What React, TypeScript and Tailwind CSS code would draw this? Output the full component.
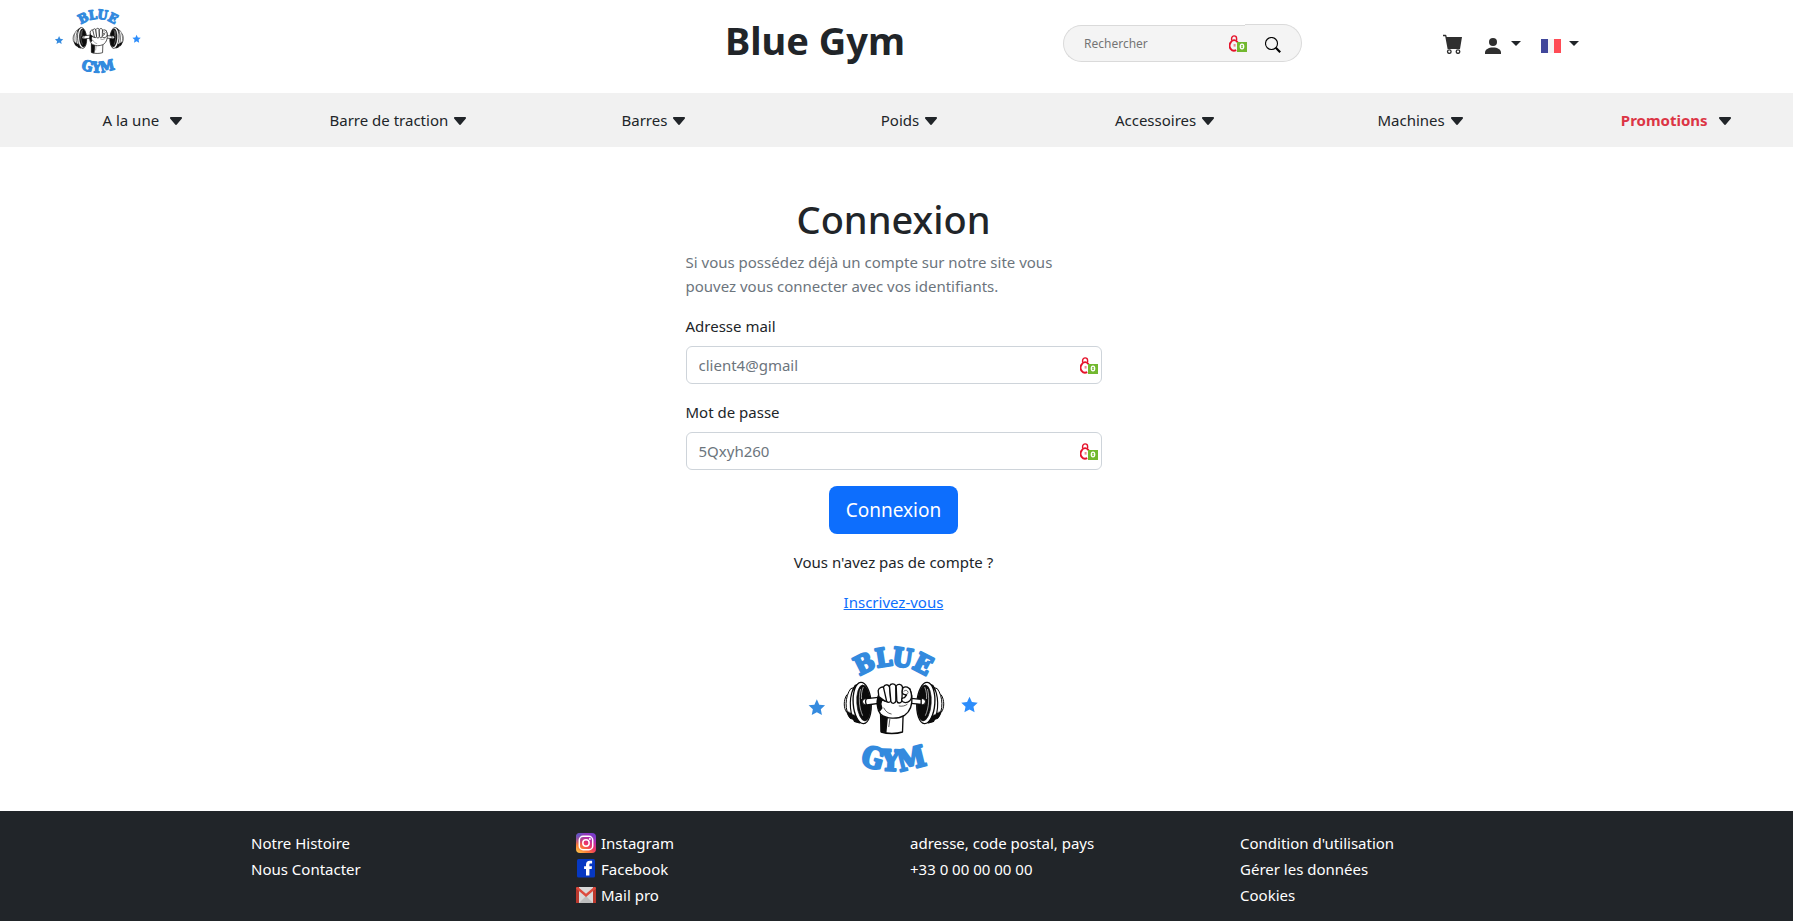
import type { ReactNode } from 'react';

const star = (cx: number, cy: number, r: number) =>
  Array.from({ length: 10 }, (_, i) => {
    const radius = i % 2 === 0 ? r : r * 0.48;
    const a = (Math.PI / 5) * i - Math.PI / 2;
    return `${(cx + radius * Math.cos(a)).toFixed(1)},${(cy + radius * Math.sin(a)).toFixed(1)}`;
  }).join(' ');

function Weight() {
  return (
    <g stroke="#0b0b0b" strokeLinejoin="round" strokeLinecap="round">
      <path d="M172 200c-9 14-9 38 0 50l8-2v-46z" fill="#fff" strokeWidth="3" />
      <path d="M184 181c-17 22-18 64-1 88l14 4v-96z" fill="#fff" strokeWidth="3" />
      <path d="M172 247c2 10 6 17 11 22l14 4v-14z" fill="#0b0b0b" strokeWidth="1" />
      <path d="M198 170c-18 26-20 78-2 108l16 5V166z" fill="#fff" strokeWidth="3.500" />
      <path d="M186 256c3 10 6 17 11 23l14 4v-18z" fill="#0b0b0b" strokeWidth="1" />
      <path d="M191 185l7-14 14-6v12z" fill="#0b0b0b" strokeWidth="1" />
      <ellipse cx="219" cy="223" rx="27" ry="62" fill="#fff" strokeWidth="4" transform="rotate(-4 219 223)" />
      <ellipse cx="224" cy="223" rx="21" ry="54" fill="#0b0b0b" strokeWidth="2" transform="rotate(-4 224 223)" />
      <path d="M214 182c-6 22-5 54 6 78M222 176c-5 12-6 24-5 34" fill="none" stroke="#fff" strokeWidth="1.800" />
      <circle cx="229" cy="219" r="9" fill="#fff" strokeWidth="3" />
    </g>
  );
}

function Logo({ className, id }: { className: string; id: string }) {
  return (
    <svg viewBox="48 40 530 396" className={className} role="img" aria-label="Blue Gym">
      <defs>
        <path id={`${id}-top`} d="M174 182A170 170 0 0 1 450 182" />
        <path id={`${id}-bottom`} d="M190 394A250 250 0 0 0 436 394" />
      </defs>
      <g
        fill="#338ade"
        stroke="#338ade"
        strokeWidth="7"
        strokeLinejoin="round"
        fontFamily="'DejaVu Serif Condensed', 'DejaVu Serif', serif"
        fontWeight="700"
        textAnchor="middle"
      >
        <text fontSize="76">
          <textPath href={`#${id}-top`} startOffset="50%">BLUE</textPath>
        </text>
        <text fontSize="86">
          <textPath href={`#${id}-bottom`} startOffset="50%">GYM</textPath>
        </text>
      </g>
      <polygon points={star(83, 238, 26)} fill="#358bdf" />
      <polygon points={star(541, 230, 26)} fill="#2d8dfb" />
      <Weight />
      <g transform="translate(629 0) scale(-1 1)">
        <Weight />
      </g>
      <g stroke="#0b0b0b" strokeWidth="4" strokeLinejoin="round" strokeLinecap="round" fill="#fff">
        <path d="M232 210l58-6v17l-57 8c-5-5-5-14-1-19z" />
        <path d="M366 209l30 3v15l-30-3z" />
        <path d="M274 254l2 56c18 6 46 6 64 0l2-56z" />
        <path d="M276 262l18 6-4 43-14-3z" fill="#0b0b0b" />
        <path d="M302 272l-3 22" strokeWidth="2" />
        <path d="M268 202c-6 22-4 42 6 54 18 16 52 16 72 4 18-12 24-34 22-58l-6-22-84 0z" />
        <path d="M268 200c-6 18-4 36 4 46l6-8c-4-8-4-16 0-24l16 6 2-16z" fill="#0b0b0b" />
        <path d="M267 186c2-10 14-14 20-8l10 32c0 8-8 10-14 4l-14-10z" />
        <path d="M283 176c3-10 15-10 18-1l4 40c-2 8-10 8-13 1z" />
        <path d="M301 172c4-9 17-8 19 1l0 44c-2 9-13 9-15 1z" />
        <path d="M321 172c5-8 17-6 19 3l-2 42c-3 8-13 8-15 0z" />
        <path d="M341 178c8-7 20-3 23 8 4 12 4 24-2 30-8 8-20 7-24 0-2-5 2-9 8-9l6-8c-8 0-14-4-13-10z" />
        <path d="M344 188c4-5 12-4 12 2M351 197c3 0 5-2 6-4M284 238c5 10 12 16 22 18M330 232c8 2 18 0 24-5" fill="none" strokeWidth="2" />
      </g>
    </svg>
  );
}

function LockBadge() {
  return (
    <svg viewBox="0 0 18 17" className="h-[17px] w-[18px]" aria-hidden="true">
      <path d="M2.600 5V3.400a2.500 2.500 0 0 1 5 0V5" fill="none" stroke="#e5132b" strokeWidth="1.400" />
      <path d="M8.600 7.200A4 4.400 0 0 0 1.600 7.600a4.600 5 0 0 0 5.600 7.600" fill="none" stroke="#e5132b" strokeWidth="1.900" />
      <path d="M4.600 9h2v2.600h-2z" fill="#e5132b" opacity=".5" />
      <path d="M8 7h10v10H8z" fill="#72b82f" />
      <ellipse cx="13" cy="11.500" rx="1.700" ry="2.400" fill="none" stroke="#fff" strokeWidth="1.300" />
      <path d="M13 11v1" stroke="#fff" strokeWidth=".8" />
    </svg>
  );
}

function NavCaret() {
  return (
    <svg viewBox="0 0 12 8" className="mt-0.5 h-2 w-3" fill="#212529" aria-hidden="true">
      <path d="M1 0h10c.9 0 1.300 1 .7 1.700L6.800 7.500a1 1 0 0 1-1.600 0L.3 1.700C-.3 1 .1 0 1 0z" />
    </svg>
  );
}

function SmallCaret() {
  return (
    <svg viewBox="0 0 10 5" className="mb-0.5 h-[5px] w-2.5" fill="#212529" aria-hidden="true">
      <path d="M0 0h10L5 5z" />
    </svg>
  );
}

const menu = [
  { label: 'A la une', wide: true },
  { label: 'Barre de traction' },
  { label: 'Barres' },
  { label: 'Poids' },
  { label: 'Accessoires' },
  { label: 'Machines' },
  { label: 'Promotions', wide: true, promo: true },
];

function Header() {
  return (
    <header className="grid h-[93px] grid-cols-[567fr_496fr_380fr_345fr] items-start pr-[5px]">
      <a href="#accueil" className="ml-[53px] mt-[7px] block w-[90px]">
        <Logo id="header-logo" className="h-[67px] w-[90px] overflow-visible" />
      </a>
      <p className="mt-4 text-center text-[38px] leading-[48px] font-bold">Blue Gym</p>
      <form className="mt-6 flex w-[239px] items-end" onSubmit={(e) => e.preventDefault()}>
        <div className="relative flex-1">
          <input
            type="search"
            aria-label="Rechercher"
            placeholder="Rechercher"
            className="block h-[37px] w-full rounded-l-full border border-r-0 border-[#dadada] bg-[#f4f4f4] pr-5 pl-5 text-xs placeholder:text-[#757575] focus:outline-none"
          />
          <span className="absolute top-2.5 -right-0.5">
            <LockBadge />
          </span>
        </div>
        <button
          type="submit"
          aria-label="Lancer la recherche"
          className="flex h-[38px] w-[57px] items-center rounded-r-full border border-l-0 border-[#dadada] bg-[#f4f4f4] pt-1 pl-5"
        >
          <svg viewBox="0 0 16 16" className="size-4" fill="none" stroke="#000" aria-hidden="true">
            <circle cx="6.500" cy="6.500" r="6" strokeWidth="1.100" />
            <path d="M10.800 10.800l4.400 4.400" strokeWidth="2.200" />
          </svg>
        </button>
      </form>
      <div className="mt-[34px] flex h-5 items-center">
        <a href="#panier" aria-label="Panier">
          <svg viewBox="0 0 20 20" className="size-5" fill="#2f2f2f" aria-hidden="true">
            <path d="M0 .8h2.600c.4 0 .7.200.8.600l.3 1.600H19l-2 12H4.600L2.200 2.300H0z" />
            <circle cx="6.300" cy="17.600" r="1.800" fill="#fff" stroke="#2f2f2f" strokeWidth="1.300" />
            <circle cx="15" cy="17.600" r="1.800" fill="#fff" stroke="#2f2f2f" strokeWidth="1.300" />
          </svg>
        </a>
        <button type="button" aria-label="Mon compte" className="ml-[22px] flex items-center gap-2.5">
          <svg viewBox="0 0 16 16" className="mt-1 size-4" fill="#2f2f2f" aria-hidden="true">
            <circle cx="8" cy="4" r="4" />
            <path d="M0 16v-1.500C0 11.500 3.500 9.500 8 9.500s8 2 8 5V16z" />
          </svg>
          <SmallCaret />
        </button>
        <button type="button" aria-label="Langue : français" className="ml-5 flex items-center gap-2">
          <svg viewBox="0 0 20 14" className="mt-1 h-3.5 w-5" aria-hidden="true">
            <path d="M0 0h7v14H0z" fill="#41479b" />
            <path d="M7 0h6v14H7z" fill="#f5f5f5" />
            <path d="M13 0h7v14h-7z" fill="#ff4b55" />
          </svg>
          <SmallCaret />
        </button>
      </div>
    </header>
  );
}

function Field({ id, type, label, placeholder }: { id: string; type: string; label: string; placeholder: string }) {
  return (
    <div className="mb-4">
      <label htmlFor={id} className="mb-2 block">
        {label}
      </label>
      <div className="relative">
        <input
          id={id}
          type={type}
          placeholder={placeholder}
          className="block h-[38px] w-full rounded-md border border-[#ced4da] bg-white px-3 placeholder:text-[#6c757d] focus:outline-none"
        />
        <span className="absolute top-[11px] right-1">
          <LockBadge />
        </span>
      </div>
    </div>
  );
}

function FooterLink({ children, icon }: { children: ReactNode; icon?: ReactNode }) {
  return (
    <li className="h-[26px]">
      <a href="#pied" className="flex items-center gap-[5px]">
        {icon}
        {children}
      </a>
    </li>
  );
}

const instagram = (
  <svg viewBox="0 0 20 20" className="size-5" aria-hidden="true">
    <defs>
      <linearGradient id="ig-base" x1="0" y1="1" x2=".7" y2="0">
        <stop offset="0" stopColor="#fed34e" />
        <stop offset=".3" stopColor="#fb7a35" />
        <stop offset=".55" stopColor="#ec3466" />
        <stop offset=".8" stopColor="#b32cab" />
        <stop offset="1" stopColor="#7a3cc9" />
      </linearGradient>
      <radialGradient id="ig-blue" cx="0" cy="0" r=".6">
        <stop offset="0" stopColor="#3f62d8" />
        <stop offset="1" stopColor="#3f62d8" stopOpacity="0" />
      </radialGradient>
    </defs>
    <rect width="20" height="20" rx="4" fill="url(#ig-base)" />
    <rect width="20" height="20" rx="4" fill="url(#ig-blue)" />
    <g fill="none" stroke="#fff" strokeWidth="1.500">
      <rect x="3.300" y="3.300" width="13.400" height="13.400" rx="3.800" />
      <circle cx="10" cy="10" r="3.200" />
    </g>
    <circle cx="13.900" cy="6.100" r="1" fill="#fff" />
  </svg>
);

const facebook = (
  <svg viewBox="0 0 20 20" className="size-5" aria-hidden="true">
    <rect x="1" y="0" width="18" height="18.500" rx="1.500" fill="#0638c2" />
    <path d="M10 16.500V10H8.100V7.300H10V5.700c0-2.600 1.400-4 3.900-4h2.200v2.900h-1.500c-.9 0-1.200.4-1.200 1.200v1.500H16l-.3 2.700h-2.300v6.500z" fill="#fff" />
  </svg>
);

const mail = (
  <svg viewBox="0 0 20 20" className="size-5" aria-hidden="true">
    <path d="M1 2h18v16H1z" fill="#d9d9d9" />
    <path d="M3 18l7-7 7 7z" fill="#bdbdbd" />
    <path d="M0 3.200C0 2.500.5 2 1.200 2H3v16H0zM20 3.200c0-.7-.5-1.200-1.200-1.200H17v16h3z" fill="#b9382d" />
    <path d="M0 3.500C0 2.500 1 2 2 2l8 6.800L18 2c1 0 2 .5 2 1.500L10 12z" fill="#dd4b3e" />
  </svg>
);

export default function App() {
  return (
    <div className="flex min-h-screen flex-col bg-white font-['Noto_Sans','Open_Sans',sans-serif] text-[15px] leading-6 text-[#212529]">
      <Header />
      <nav aria-label="Catégories" className="h-[54px] bg-[#f1f1f1] pr-1">
        <ul className="grid h-full grid-cols-7">
          {menu.map(({ label, wide, promo }) => (
            <li key={label} className="flex items-center justify-center pl-[29px]">
              <a href="#categorie" className={wide ? 'flex items-center gap-[11px]' : 'flex items-center gap-1.5'}>
                <span className={promo ? 'font-bold text-[#dc3545]' : ''}>{label}</span>
                <NavCaret />
              </a>
            </li>
          ))}
        </ul>
      </nav>
      <main className="flex-1 pr-1.5">
        <div className="mx-auto w-[416px] max-w-full pt-12">
          <h1 className="mb-[7px] text-center text-[38px] leading-[48px] font-medium">Connexion</h1>
          <p className="mb-4 text-[#6c757d]">
            Si vous possédez déjà un compte sur notre site vous pouvez vous connecter avec vos identifiants.
          </p>
          <form onSubmit={(e) => e.preventDefault()}>
            <Field id="email" type="email" label="Adresse mail" placeholder="client4@gmail" />
            <Field id="password" type="password" label="Mot de passe" placeholder="5Qxyh260" />
            <button
              type="submit"
              className="mx-auto block h-12 w-[129px] rounded-lg bg-[#0d6efd] text-[19px] leading-[30px] text-white"
            >
              Connexion
            </button>
          </form>
          <p className="mt-4 text-center">Vous n'avez pas de compte ?</p>
          <p className="mt-4 text-center">
            <a href="#inscription" className="text-[#0d6efd] underline">
              Inscrivez-vous
            </a>
          </p>
          <Logo id="main-logo" className="mx-auto mt-7 mb-9 h-[132px] w-[177px] overflow-visible" />
        </div>
      </main>
      <footer className="h-[110px] bg-[#212529] pt-5 text-white">
        <div className="grid grid-cols-[251fr_325fr_334fr_330fr_553fr]">
          <ul className="col-start-2">
            <FooterLink>Notre Histoire</FooterLink>
            <FooterLink>Nous Contacter</FooterLink>
          </ul>
          <ul>
            <FooterLink icon={instagram}>Instagram</FooterLink>
            <FooterLink icon={facebook}>Facebook</FooterLink>
            <FooterLink icon={mail}>Mail pro</FooterLink>
          </ul>
          <address className="not-italic">
            <p className="h-[26px]">adresse, code postal, pays</p>
            <p className="h-[26px]">+33 0 00 00 00 00</p>
          </address>
          <ul>
            <FooterLink>Condition d'utilisation</FooterLink>
            <FooterLink>Gérer les données</FooterLink>
            <FooterLink>Cookies</FooterLink>
          </ul>
        </div>
      </footer>
    </div>
  );
}
